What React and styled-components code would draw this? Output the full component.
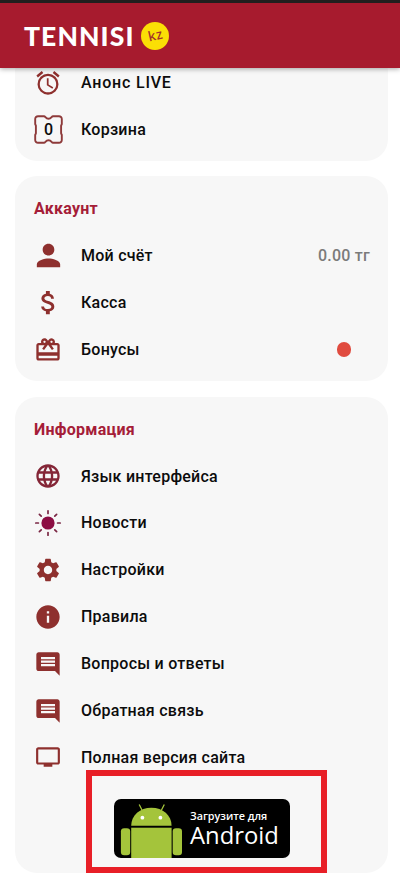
import styled, { createGlobalStyle } from "styled-components";
import {
  MdAttachMoney,
  MdComment,
  MdInfo,
  MdLanguage,
  MdOutlineAlarm,
  MdPerson,
  MdRedeem,
  MdSettings,
  MdTv,
} from "react-icons/md";

const GlobalStyle = createGlobalStyle`
  * {
    box-sizing: border-box;
  }
  body {
    margin: 0;
    background-color: #fff;
    font-family: Roboto, "Liberation Sans", sans-serif;
    overflow: hidden;
  }
`;

const Page = styled.div`
  position: relative;
  height: 877px;
  overflow: hidden;
`;

const Header = styled.header`
  position: relative;
  z-index: 2;
  display: flex;
  align-items: center;
  gap: 8px;
  height: 68px;
  border-top: 3px solid #211f1e;
  padding-left: 24px;
  background-color: #a71b2e;
  box-shadow: 0 1px 5px rgba(0, 0, 0, 0.35);
`;

const LogoText = styled.span`
  width: 109px;
  font-family: Lato, sans-serif;
  font-size: 26.5px;
  font-weight: 900;
  line-height: 32px;
  letter-spacing: 1.1px;
  color: #fff;
  white-space: nowrap;
`;

const LogoBadge = styled.span`
  display: flex;
  align-items: center;
  justify-content: center;
  width: 28px;
  height: 28px;
  border-radius: 50%;
  background-color: #fbdf05;
  color: #a3302a;
  font-family: "Noto Sans", sans-serif;
  font-size: 13.5px;
  font-weight: 500;
  line-height: 14px;
  letter-spacing: 0.3px;

  span {
    transform: rotate(-13deg);
    margin-top: -2px;
  }
`;

const Menu = styled.main`
  display: flex;
  flex-direction: column;
  gap: 15.5px;
  margin-top: -17.8px;
  padding: 0 12px 0 15px;
`;

const Card = styled.section`
  padding: 9px 18px 8px 19px;
  border-radius: 22px;
  background-color: #f7f7f7;
`;

const CardTitle = styled.h2`
  margin: 0;
  font-size: 16px;
  font-weight: 700;
  line-height: 47px;
  letter-spacing: 0.25px;
  color: #a51d38;
`;

const Row = styled.a`
  display: flex;
  align-items: center;
  height: 46.9px;
  color: #0c0c0c;
  font-size: 16px;
  font-weight: 500;
  letter-spacing: ${(props) => props.$spacing || "0.25px"};
  white-space: nowrap;
`;

const IconBox = styled.span`
  display: flex;
  flex: none;
  align-items: center;
  justify-content: center;
  width: 28px;
  height: 28px;
  margin-right: 19px;
  color: #8e302e;

  svg {
    flex: none;
  }
`;

const Balance = styled.span`
  margin-left: auto;
  color: #7b7b7b;
  letter-spacing: 0.25px;
`;

const Dot = styled.span`
  width: 14.5px;
  height: 14.5px;
  margin-left: auto;
  margin-right: 19px;
  border-radius: 50%;
  background-color: #e04b3f;
`;

const AndroidButton = styled.a`
  display: flex;
  width: 176px;
  height: 59.5px;
  margin: 18px 0 6.5px 80px;
  border-radius: 7px;
  background-color: #000;
  color: #fff;
  overflow: hidden;
`;

const AndroidText = styled.span`
  display: flex;
  flex-direction: column;
  padding: 9px 0 0 6px;
  font-family: "Open Sans", "Noto Sans", sans-serif;
  white-space: nowrap;
`;

const AndroidSmall = styled.span`
  font-size: 10.8px;
  font-weight: 600;
  line-height: 15px;
`;

const AndroidBig = styled.span`
  font-size: 23.8px;
  line-height: 24px;
`;

/* red marker frame drawn over the download button */
const Highlight = styled.div`
  position: absolute;
  left: 86px;
  top: 770px;
  width: 241px;
  height: 103px;
  border: 6px solid #e81f27;
`;

function TicketIcon() {
  return (
    <svg width="29" height="29" viewBox="0 0 29 29">
      <path
        d="M4 1.2h6c1.500 0 1.500 2.600 4.500 2.600s3-2.600 4.500-2.600h6a2.800 2.800 0 0 1 2.800 2.800v5c0 .8-.7 1-.7 1.800v7.400c0 .8.7 1 .7 1.800v5a2.800 2.800 0 0 1-2.800 2.800h-6c-1.500 0-1.500-2.600-4.500-2.600s-3 2.600-4.500 2.600H4A2.800 2.800 0 0 1 1.200 25v-5c0-.8.7-1 .7-1.800v-7.400c0-.8-.7-1-.7-1.800V4A2.800 2.800 0 0 1 4 1.200z"
        fill="none"
        stroke="#8e3a3a"
        strokeWidth="1.9"
      />
      <text
        x="14.5"
        y="20.2"
        textAnchor="middle"
        fontFamily="Roboto"
        fontSize="16"
        fontWeight="500"
        letterSpacing="0"
        fill="#0c0c0c"
      >
        0
      </text>
    </svg>
  );
}

function SunIcon() {
  return (
    <svg width="28" height="28" viewBox="-14 -14 28 28">
      <circle r="6.6" fill="#8c0d43" />
      {[0, 45, 90, 135, 180, 225, 270, 315].map((a) => (
        <path
          key={a}
          d="M9.6 0H12.2"
          stroke="#7a2744"
          strokeWidth="1.7"
          strokeLinecap="round"
          transform={`rotate(${a})`}
        />
      ))}
    </svg>
  );
}

function AndroidRobot() {
  return (
    <svg width="70" height="60" viewBox="0 0 70 60" fill="#a4c43b">
      <path d="M17.2 26.8C17.2 16 26 8.7 37.4 8.7S57.6 16 57.6 26.8z" />
      <path d="M25.2 5.5l3.300 6.500M50.300 5.500L47 12" stroke="#a4c43b" strokeWidth="1.3" />
      <circle cx="28.4" cy="18.7" r="1.9" fill="#fff" />
      <circle cx="46.4" cy="18.7" r="1.9" fill="#fff" />
      <rect x="17.2" y="28.7" width="40.4" height="31.3" />
      <rect x="6.9" y="29.3" width="9.3" height="27" rx="3.3" />
      <rect x="58.7" y="29.3" width="9.3" height="27" rx="3.3" />
    </svg>
  );
}

function MenuRow({ icon, label, spacing, children }) {
  return (
    <Row $spacing={spacing}>
      <IconBox>{icon}</IconBox>
      {label}
      {children}
    </Row>
  );
}

export default function App() {
  return (
    <Page>
      <GlobalStyle />
      <Header>
        <LogoText>TENNISI</LogoText>
        <LogoBadge>
          <span>kz</span>
        </LogoBadge>
      </Header>
      <Menu>
        <Card>
          <MenuRow icon={<MdOutlineAlarm size={28} />} label="Анонс LIVE" spacing="0.8px" />
          <MenuRow icon={<TicketIcon />} label="Корзина" />
        </Card>
        <Card>
          <CardTitle>Аккаунт</CardTitle>
          <MenuRow icon={<MdPerson size={35} />} label="Мой счёт">
            <Balance>0.00 тг</Balance>
          </MenuRow>
          <MenuRow icon={<MdAttachMoney size={31} />} label="Касса" />
          <MenuRow icon={<MdRedeem size={28} />} label="Бонусы">
            <Dot />
          </MenuRow>
        </Card>
        <Card>
          <CardTitle>Информация</CardTitle>
          <MenuRow icon={<MdLanguage size={28} color="#842637" />} label="Язык интерфейса" />
          <MenuRow icon={<SunIcon />} label="Новости" />
          <MenuRow icon={<MdSettings size={28} />} label="Настройки" />
          <MenuRow icon={<MdInfo size={28} />} label="Правила" />
          <MenuRow icon={<MdComment size={28} />} label="Вопросы и ответы" />
          <MenuRow icon={<MdComment size={28} />} label="Обратная связь" />
          <MenuRow icon={<MdTv size={26} />} label="Полная версия сайта" />
          <AndroidButton>
            <AndroidRobot />
            <AndroidText>
              <AndroidSmall>Загрузите для</AndroidSmall>
              <AndroidBig>Android</AndroidBig>
            </AndroidText>
          </AndroidButton>
        </Card>
      </Menu>
      <Highlight />
    </Page>
  );
}
